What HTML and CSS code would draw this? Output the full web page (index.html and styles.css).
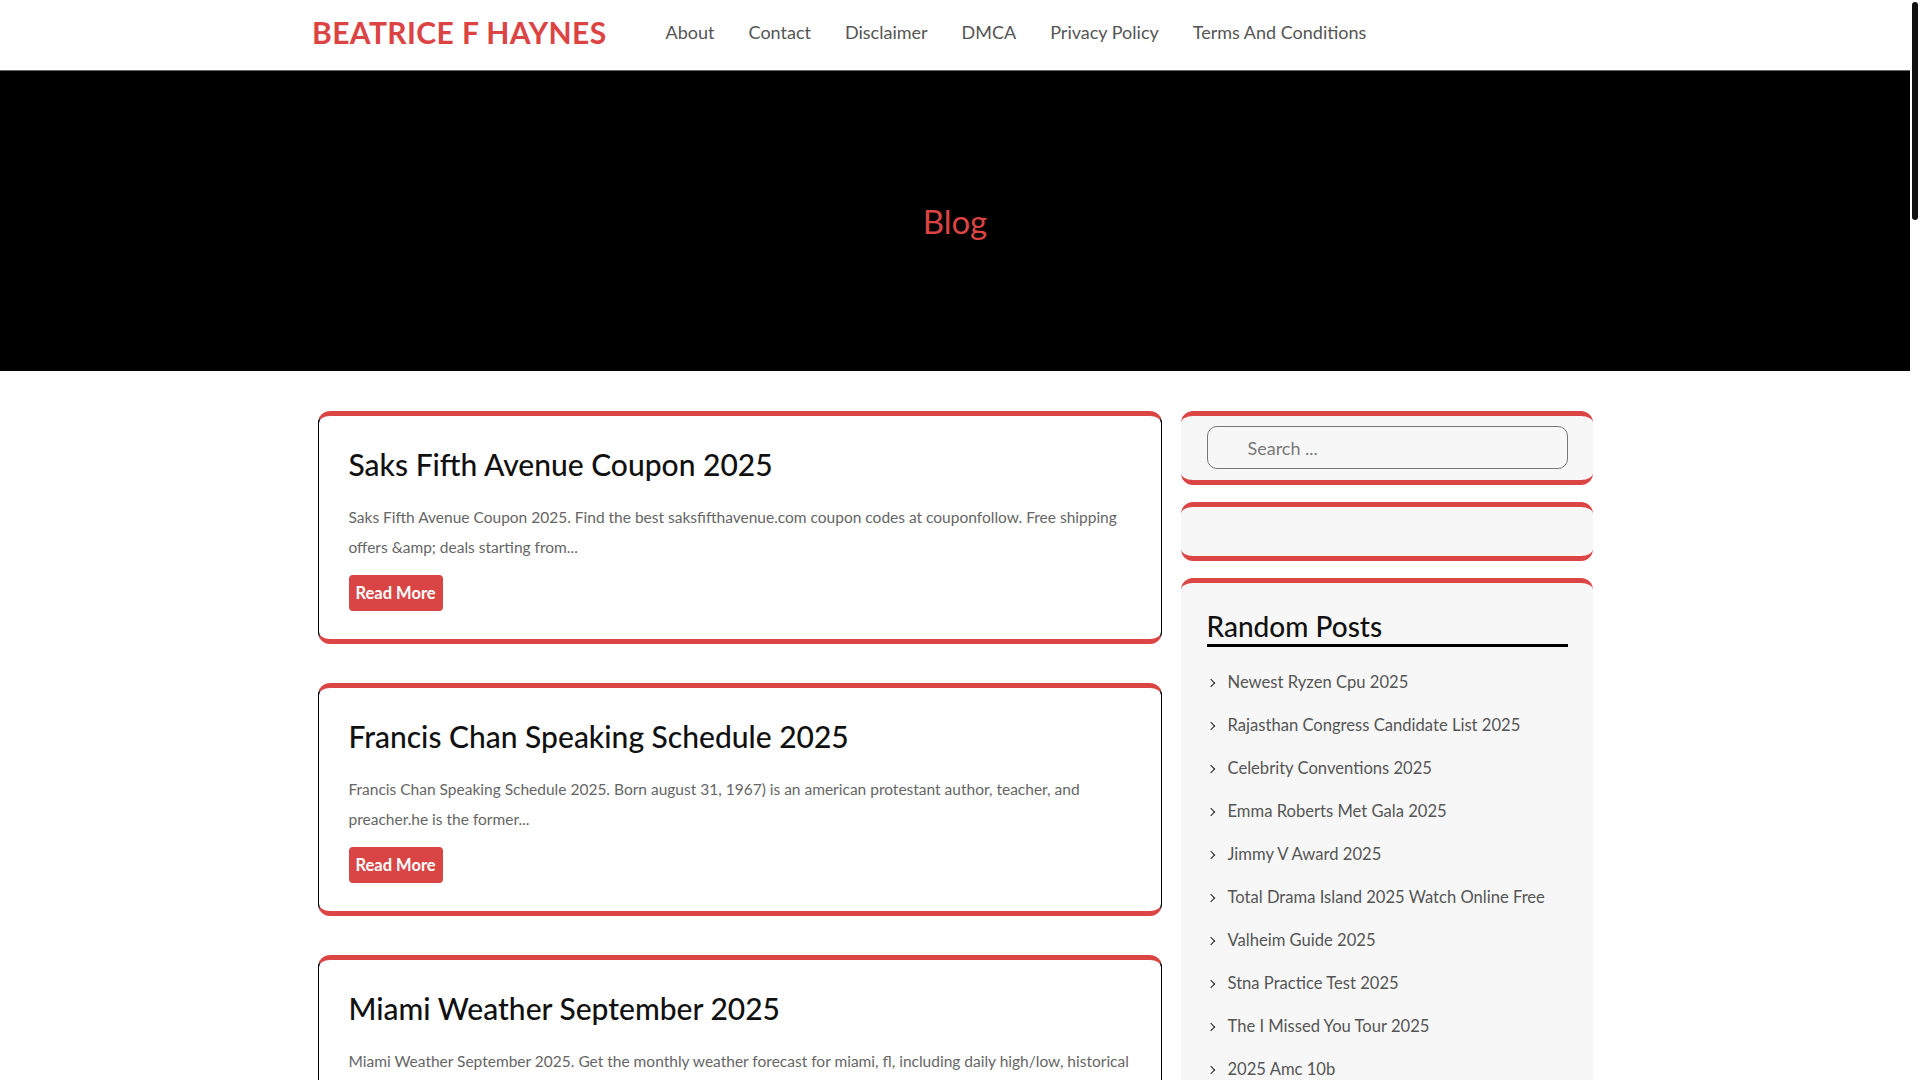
FILE: index.html
```html
<!DOCTYPE html>
<html lang="en">
<head>
    <meta charset="UTF-8">
    <meta name="viewport" content="width=device-width, initial-scale=1.0">
    <title>Blog - Beatrice F Haynes</title>
    <link rel="stylesheet" href="styles.css">
</head>
<body>

    <!-- Header -->
    <header class="site-header">
        <div class="header-inner">
            <a class="site-title" href="#">BEATRICE F HAYNES</a>
            <nav class="main-nav">
                <a href="#">About</a>
                <a href="#">Contact</a>
                <a href="#">Disclaimer</a>
                <a href="#">DMCA</a>
                <a href="#">Privacy Policy</a>
                <a href="#">Terms And Conditions</a>
            </nav>
        </div>
    </header>

    <!-- Page banner -->
    <section class="page-banner">
        <h1>Blog</h1>
    </section>

    <div class="content-wrap">
        <main class="post-list">
            <article class="post-card">
                <h2><a href="#">Saks Fifth Avenue Coupon 2025</a></h2>
                <p>Saks Fifth Avenue Coupon 2025. Find the best saksfifthavenue.com coupon codes at couponfollow. Free shipping offers &amp;amp; deals starting from...</p>
                <a class="read-more" href="#">Read More</a>
            </article>

            <article class="post-card">
                <h2><a href="#">Francis Chan Speaking Schedule 2025</a></h2>
                <p>Francis Chan Speaking Schedule 2025. Born august 31, 1967) is an american protestant author, teacher, and preacher.he is the former...</p>
                <a class="read-more" href="#">Read More</a>
            </article>

            <article class="post-card">
                <h2><a href="#">Miami Weather September 2025</a></h2>
                <p>Miami Weather September 2025. Get the monthly weather forecast for miami, fl, including daily high/low, historical averages, to help you plan ahead...</p>
                <a class="read-more" href="#">Read More</a>
            </article>

            <article class="post-card">
                <h2><a href="#">Newest Ryzen Cpu 2025</a></h2>
                <p>Newest Ryzen Cpu 2025. Everything we know so far about the next generation of desktop and laptop processors, release dates and...</p>
                <a class="read-more" href="#">Read More</a>
            </article>

            <article class="post-card">
                <h2><a href="#">Celebrity Conventions 2025</a></h2>
                <p>Celebrity Conventions 2025. A full list of upcoming comic and celebrity conventions, guests, dates and ticket information for...</p>
                <a class="read-more" href="#">Read More</a>
            </article>

            <article class="post-card">
                <h2><a href="#">Emma Roberts Met Gala 2025</a></h2>
                <p>Emma Roberts Met Gala 2025. See every look from the red carpet, the designers behind them and the best moments of the...</p>
                <a class="read-more" href="#">Read More</a>
            </article>

            <article class="post-card">
                <h2><a href="#">Jimmy V Award 2025</a></h2>
                <p>Jimmy V Award 2025. The jimmy v award for perseverance is presented annually at the espys to a member of the sporting world who...</p>
                <a class="read-more" href="#">Read More</a>
            </article>

            <article class="post-card">
                <h2><a href="#">Valheim Guide 2025</a></h2>
                <p>Valheim Guide 2025. Tips and tricks for new players, from building your first shelter to defeating the first boss and...</p>
                <a class="read-more" href="#">Read More</a>
            </article>

            <article class="post-card">
                <h2><a href="#">Stna Practice Test 2025</a></h2>
                <p>Stna Practice Test 2025. Free practice questions for the state tested nursing assistant exam, with answers and explanations to...</p>
                <a class="read-more" href="#">Read More</a>
            </article>

            <article class="post-card">
                <h2><a href="#">The I Missed You Tour 2025</a></h2>
                <p>The I Missed You Tour 2025. Tour dates, venues and ticket details for every city on the upcoming schedule, plus setlist...</p>
                <a class="read-more" href="#">Read More</a>
            </article>

            <article class="post-card">
                <h2><a href="#">2025 Amc 10b</a></h2>
                <p>2025 Amc 10b. Problems, answer key and solutions for the american mathematics competition, with tips on how to prepare for...</p>
                <a class="read-more" href="#">Read More</a>
            </article>

            <article class="post-card">
                <h2><a href="#">Total Drama Island 2025 Watch Online Free</a></h2>
                <p>Total Drama Island 2025 Watch Online Free. Where to stream the new season, episode guide and release schedule for...</p>
                <a class="read-more" href="#">Read More</a>
            </article>

            <div class="pagination">
                <span class="page current">1</span>
                <a class="page" href="#">2</a>
                <a class="page" href="#">3</a>
                <a class="page" href="#">Next</a>
            </div>
        </main>

        <aside class="sidebar">
            <div class="widget widget-search">
                <input type="search" class="search-field" placeholder="Search ...">
            </div>

            <div class="widget widget-empty"></div>

            <div class="widget">
                <h3 class="widget-title">Random Posts</h3>
                <ul class="post-links">
                    <li><a href="#">Newest Ryzen Cpu 2025</a></li>
                    <li><a href="#">Rajasthan Congress Candidate List 2025</a></li>
                    <li><a href="#">Celebrity Conventions 2025</a></li>
                    <li><a href="#">Emma Roberts Met Gala 2025</a></li>
                    <li><a href="#">Jimmy V Award 2025</a></li>
                    <li><a href="#">Total Drama Island 2025 Watch Online Free</a></li>
                    <li><a href="#">Valheim Guide 2025</a></li>
                    <li><a href="#">Stna Practice Test 2025</a></li>
                    <li><a href="#">The I Missed You Tour 2025</a></li>
                    <li><a href="#">2025 Amc 10b</a></li>
                </ul>
            </div>
        </aside>
    </div>

    <footer class="site-footer">
        <p>Copyright &copy; 2025 Beatrice F Haynes</p>
    </footer>

    <!-- page scrollbar -->
    <div class="scroll-track"><div class="scroll-thumb"></div></div>

</body>
</html>
```

FILE: styles.css
```css
body {
    font-family: Lato, "Noto Sans", sans-serif;
    margin: 0 10px 0 0;
    background: #fff;
    color: #111;
}
a {
    text-decoration: none;
    color: inherit;
}

/* scrollbar drawn over the right edge */
.scroll-track {
    position: fixed;
    top: 0;
    right: 0;
    width: 10px;
    height: 100vh;
    background: #fff;
}
.scroll-thumb {
    margin: 2px 0 0 2px;
    width: 6px;
    height: 218px;
    background: #111;
    border-radius: 3px;
}

/* header */
.site-header {
    height: 70px;
    border-bottom: 1px solid #666;
    background: #fff;
}
.header-inner {
    width: 1284px;
    margin: 0 auto;
    height: 64px;
    display: flex;
    align-items: center;
    position: relative;
    left: -1px;
}
.site-title {
    color: #dc4343;
    font-size: 30px;
    font-weight: 700;
    letter-spacing: 0.4px;
}
.main-nav {
    display: flex;
    gap: 34px;
    margin-left: 59px;
}
.main-nav a {
    color: #555;
    font-size: 18px;
}

/* banner */
.page-banner {
    background: #000;
    height: 300px;
    display: flex;
    justify-content: center;
    align-items: center;
}
.page-banner h1 {
    margin: 0;
    color: #dc4343;
    font-size: 33px;
    font-weight: 400;
}

/* layout */
.content-wrap {
    width: 1275px;
    margin: 40px auto;
    display: grid;
    grid-template-columns: 844px 412px;
    gap: 19px;
    align-items: start;
}
.post-list {
    display: flex;
    flex-direction: column;
    gap: 39px;
}

/* post cards */
.post-card {
    border: 1px solid #000;
    border-top: 5px solid #dc4545;
    border-bottom: 5px solid #dc4545;
    border-radius: 12px;
    padding: 30px 30px 28px;
    background: #fff;
}
.post-card h2 {
    margin: 0 0 20px;
    font-size: 30px;
    font-weight: 500;
    line-height: 36px;
    color: #111;
}
.post-card p {
    margin: 0 0 13px;
    font-size: 15.5px;
    line-height: 30px;
    color: #666;
}
.read-more {
    display: inline-block;
    background: #d94545;
    color: #fff;
    font-weight: 700;
    font-size: 16.5px;
    line-height: 36px;
    padding: 0 7px;
    border-radius: 4px;
}

.pagination {
    display: flex;
    gap: 8px;
}
.page {
    border: 1px solid #ccc;
    padding: 8px 14px;
    border-radius: 4px;
    color: #555;
}
.page.current {
    background: #d94545;
    border-color: #d94545;
    color: #fff;
}

/* sidebar */
.sidebar {
    display: flex;
    flex-direction: column;
    gap: 17px;
}
.widget {
    background: #f7f7f7;
    border-top: 5px solid #dc4545;
    border-bottom: 5px solid #dc4545;
    border-radius: 12px;
    padding: 25px 25px 20px 26px;
}
.widget-search {
    padding: 10px 25px 11px 26px;
}
.widget-empty {
    height: 49px;
    padding: 0;
}
.search-field {
    width: 100%;
    box-sizing: border-box;
    height: 43px;
    border: 1px solid #777;
    border-radius: 10px;
    background: transparent;
    padding: 0 10px 0 40px;
    font-family: inherit;
    font-size: 18px;
    color: #555;
}
.search-field::placeholder {
    color: #777;
}
.widget-title {
    margin: 0 0 14px;
    font-size: 28px;
    font-weight: 500;
    line-height: 36px;
    border-bottom: 3px solid #000;
}
.post-links {
    list-style: none;
    margin: 0;
    padding: 0;
}
.post-links li {
    padding: 8px 0;
    line-height: 27px;
    font-size: 16.6px;
    color: #555;
    display: flex;
    align-items: center;
}
.post-links li::before {
    content: "";
    width: 5px;
    height: 5px;
    border-top: 1.5px solid #222;
    border-right: 1.5px solid #222;
    transform: rotate(45deg);
    margin: 0 14px 0 1px;
}

.site-footer {
    background: #000;
    color: #aaa;
    text-align: center;
    padding: 40px 0;
    margin-top: 60px;
}
```
